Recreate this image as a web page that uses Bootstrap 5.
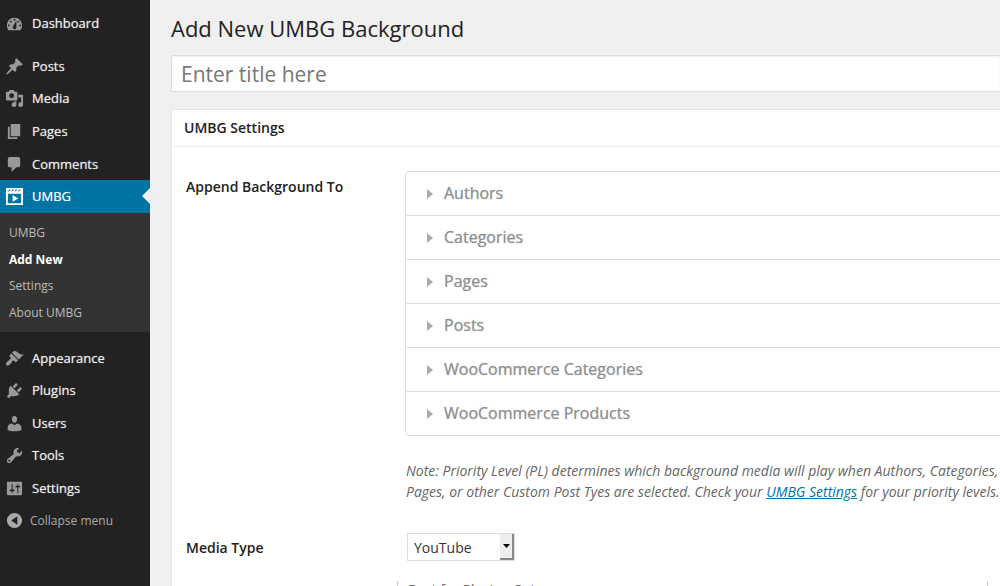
<!DOCTYPE html>
<html lang="en">
<head>
<meta charset="utf-8">
<meta name="viewport" content="width=device-width, initial-scale=1">
<title>Add New UMBG Background</title>
<link rel="stylesheet" href="https://cdn.jsdelivr.net/npm/bootstrap@5.3.0/dist/css/bootstrap.min.css">
<style>
body { font-family: "Open Sans", "Liberation Sans", sans-serif; font-size: 14px; line-height: 21px; background: #f0f0f0; color: #222; }
a { color: #0074a2; }
.admin-shell { height: 100vh; }
.side-menu { width: 150px; background: #222; padding-top: 7px; }
.menu-group { display: grid; grid-auto-rows: 1fr; margin-top: 10px; }
.menu-group.upper { height: 163px; }
.menu-group.lower { height: 195px; }
.side-menu .nav-link { color: #eee; padding: 0 0 0 5px; gap: 8px; font-size: 13px; text-shadow: 0 0 1px rgba(255,255,255,.6); }
.side-menu .nav-link.dash { height: 33px; }
.side-menu svg { width: 19px; height: 19px; fill: #999; flex: none; }
.side-menu .nav-link.current { position: relative; background: #0074a2; color: #fff; }
.side-menu .nav-link.current svg { fill: #fff; }
.nav-link.current::after { content: ""; position: absolute; right: 0; top: 8px; border: 8px solid transparent; border-right-color: #f0f0f0; border-left: 0; }
.sub-menu { display: grid; grid-auto-rows: 1fr; height: 119px; background: #333; padding: 6px 0; }
.side-menu .sub-menu .nav-link { padding-left: 9px; font-size: 12px; color: #bbb; text-shadow: none; }
.side-menu .sub-menu .nav-link.chosen { color: #fff; font-weight: 700; }
.collapse-btn { background: none; border: 0; color: #aaa; font-size: 12px; padding: 0 0 0 5px; gap: 6px; }
.side-menu .collapse-btn svg { fill: #aaa; }
.main-area { padding: 12px 0 0 21px; }
h1 { font-size: 22px; line-height: 32px; font-weight: 400; margin: 0 0 11px; }
.title-input { height: 37px; border: 1px solid #ddd; border-right: 0; border-radius: 0; padding: 0 9px; font-size: 21px; box-shadow: inset 0 1px 2px rgba(0,0,0,.07); }
.title-input::placeholder { color: #777; }
.settings-box { margin-top: 17px; background: #fff; border: 1px solid #e5e5e5; border-right: 0; }
.settings-box h2 { font-size: 14px; font-weight: 600; line-height: 36px; margin: 0; padding-left: 12px; border-bottom: 1px solid #eee; }
.field-row { padding-left: 14px; }
.field-row.media-row { padding-top: 31px; }
.field-name { width: 219px; flex: none; font-weight: 600; line-height: 32px; }
.media-row .field-name { line-height: 30px; }
.accordion-list { border: 1px solid #ddd; border-right: 0; border-radius: 5px 0 0 5px; }
.accordion-list button { display: flex; align-items: center; gap: 11px; width: 100%; height: 44px; padding: 0 0 0 21px; border: 0; border-bottom: 1px solid #ddd; background: none; color: #909090; font-size: 16px; text-shadow: 0 0 1px rgba(144,144,144,.7); }
.accordion-list button:last-child { border-bottom: 0; height: 43px; }
.accordion-list svg { width: 6px; height: 10px; fill: #aaa; }
.note { margin: 24px 0 0 1px; font-style: italic; color: #666; }
.media-field { padding-left: 2px; }
.media-select { appearance: none; width: 108px; height: 28px; border: 1px solid #ddd; border-radius: 0; padding: 0 6px; font-size: 14px; color: #333; background: #fff; }
.select-knob { position: absolute; right: 1px; top: 1px; bottom: 1px; width: 14px; background: #eee; border: solid #888; border-width: 0 2px 2px 0; pointer-events: none; }
.hint-box { border: solid #ccc; border-width: 0 1px; margin: 20px 12px 0 -10px; padding-left: 10px; height: 60px; color: #666; }
.hint-box legend { font-size: 14px; line-height: 18px; }
</style>
</head>
<body>
<div class="admin-shell d-flex overflow-hidden">
  <nav class="side-menu flex-shrink-0" aria-label="Main menu">
    <a class="nav-link d-flex align-items-center dash" href="#"><svg viewBox="0 0 20 20"><path fill-rule="evenodd" d="M3.760 17h12.480A7.956 7.956 0 0 0 18 12c0-4.420-3.580-8-8-8s-8 3.580-8 8c0 1.900.66 3.640 1.760 5zM10 5a1 1 0 1 1 0 2 1 1 0 0 1 0-2zM6 7a1 1 0 1 1 0 2 1 1 0 0 1 0-2zm8 0a1 1 0 1 1 0 2 1 1 0 0 1 0-2zM8.600 12.600 12 7v7a2 2 0 1 1-3.400-1.400zM4 11a1 1 0 1 1 0 2 1 1 0 0 1 0-2zm12 0a1 1 0 1 1 0 2 1 1 0 0 1 0-2z"/></svg>Dashboard</a>
    <div class="menu-group upper">
      <a class="nav-link d-flex align-items-center" href="#"><svg viewBox="0 0 20 20"><path d="M10.440 3.020l1.820-1.820 6.360 6.350-1.830 1.820c-1.050-.68-2.480-.57-3.410.36l-.75.75c-.92.93-1.040 2.350-.35 3.410l-1.830 1.820-2.410-2.410-2.800 2.790c-.42.42-3.380 2.710-3.800 2.290s1.860-3.390 2.280-3.810l2.790-2.790L4.100 9.360l1.830-1.820c1.050.69 2.480.57 3.400-.36l.75-.75c.93-.92 1.050-2.350.36-3.410z"/></svg>Posts</a>
      <a class="nav-link d-flex align-items-center" href="#"><svg viewBox="0 0 20 20"><path fill-rule="evenodd" d="M13 11V4c0-.55-.45-1-1-1h-1.670L9 1H5L3.670 3H2c-.55 0-1 .45-1 1v7c0 .55.45 1 1 1h10c.55 0 1-.45 1-1zM7 4.500a2.500 2.500 0 1 1 0 5 2.500 2.500 0 0 1 0-5zM14 6h5v10.500a2.500 2.500 0 1 1-2-2.450V9h-3zm-4 8.050V13h2v3.500a2.500 2.500 0 1 1-2-2.450z"/></svg>Media</a>
      <a class="nav-link d-flex align-items-center" href="#"><svg viewBox="0 0 20 20"><path d="M6 15V2h10v13H6zm-1 1h8v2H3V5h2v11z"/></svg>Pages</a>
      <a class="nav-link d-flex align-items-center" href="#"><svg viewBox="0 0 20 20"><path d="M5 2h9c1.100 0 2 .9 2 2v7c0 1.100-.9 2-2 2h-2l-5 5v-5H5c-1.100 0-2-.9-2-2V4c0-1.100.9-2 2-2z"/></svg>Comments</a>
      <a class="nav-link d-flex align-items-center current" href="#"><svg viewBox="0 0 20 20"><path fill-rule="evenodd" d="M1 1h18v18H1zM3 7v10h14V7zM3 4.500h1.500L6 2.500H4.500zm3.500 0H8l1.500-2H8zm3.500 0h1.500l1.500-2h-1.500zm3.500 0H15l1.500-2H15zM8 8.500l6 3.500-6 3.500z"/></svg>UMBG</a>
    </div>
    <div class="sub-menu">
      <a class="nav-link d-flex align-items-center" href="#">UMBG</a>
      <a class="nav-link d-flex align-items-center chosen" href="#">Add New</a>
      <a class="nav-link d-flex align-items-center" href="#">Settings</a>
      <a class="nav-link d-flex align-items-center" href="#">About UMBG</a>
    </div>
    <div class="menu-group lower">
      <a class="nav-link d-flex align-items-center" href="#"><svg viewBox="0 0 20 20"><path d="M14.480 11.060L7.410 3.990l1.500-1.500c.5-.56 2.300-.47 3.510.32 1.210.8 1.430 1.280 2.910 2.100 1.180.64 2.450 1.260 4.450.85zm-.71.71L6.700 4.700 4.930 6.470c-.39.39-.39 1.020 0 1.410l1.060 1.060c.39.39.39 1.030 0 1.420-.6.6-1.430 1.110-2.210 1.690-.35.26-.7.53-1.010.84C1.430 14.230.4 16.080 1.400 17.070c.99 1 2.840-.03 4.180-1.360.31-.31.58-.66.85-1.020.57-.78 1.080-1.610 1.690-2.210.39-.39 1.020-.39 1.410 0l1.060 1.060c.39.39 1.020.39 1.410 0z"/></svg>Appearance</a>
      <a class="nav-link d-flex align-items-center" href="#"><svg viewBox="0 0 20 20"><path d="M13.110 4.360L9.870 7.600 8 5.730l3.240-3.240c.35-.34 1.050-.2 1.560.32.52.51.66 1.210.31 1.550zm-8 1.770l.91-1.120 9.010 9.010-1.190.84c-.71.71-2.630 1.160-3.820 1.160H6.140L4.900 17.260c-.59.59-1.540.59-2.120 0-.59-.58-.59-1.530 0-2.120l1.240-1.240v-3.880c0-1.130.4-3.190 1.090-3.890zm7.260 3.970l3.240-3.240c.34-.35 1.040-.21 1.550.31.52.51.66 1.210.31 1.550l-3.240 3.250z"/></svg>Plugins</a>
      <a class="nav-link d-flex align-items-center" href="#"><svg viewBox="0 0 20 20"><path d="M10 9.250c-2.270 0-2.730-3.440-2.730-3.440C7 4.020 7.820 2 9.970 2c2.160 0 2.980 2.020 2.710 3.810 0 0-.41 3.440-2.680 3.440zm0 2.570L12.720 10c2.390 0 4.520 2.330 4.520 4.530v2.490s-3.650 1.130-7.240 1.130c-3.650 0-7.240-1.130-7.240-1.130v-2.490c0-2.250 1.940-4.480 4.470-4.480z"/></svg>Users</a>
      <a class="nav-link d-flex align-items-center" href="#"><svg viewBox="0 0 20 20"><path fill-rule="evenodd" d="M16.680 9.770c-1.340 1.340-3.300 1.670-4.950.99l-5.410 6.520c-.99.99-2.590.99-3.580 0s-.99-2.590 0-3.570l6.520-5.420c-.68-1.650-.35-3.610.99-4.950 1.280-1.280 3.120-1.620 4.720-1.060l-2.890 2.890 2.820 2.820 2.860-2.870c.53 1.580.18 3.390-1.080 4.650zM3.810 16.210c.4.39 1.040.39 1.430 0 .4-.4.4-1.040 0-1.430-.39-.4-1.030-.4-1.430 0-.39.39-.39 1.030 0 1.430z"/></svg>Tools</a>
      <a class="nav-link d-flex align-items-center" href="#"><svg viewBox="0 0 20 20"><path fill-rule="evenodd" d="M18 16V4c0-.55-.45-1-1-1H3c-.55 0-1 .45-1 1v12c0 .55.45 1 1 1h14c.55 0 1-.45 1-1zM8 11h1c.55 0 1 .45 1 1s-.45 1-1 1H8v1.500c0 .28-.22.5-.5.5s-.5-.22-.5-.5V13H6c-.55 0-1-.45-1-1s.45-1 1-1h1V5.500c0-.28.22-.5.5-.5s.5.22.5.5V11zm5-2h-1c-.55 0-1-.45-1-1s.45-1 1-1h1V5.500c0-.28.22-.5.5-.5s.5.22.5.5V7h1c.55 0 1 .45 1 1s-.45 1-1 1h-1v5.500c0 .28-.22.5-.5.5s-.5-.22-.5-.5V9z"/></svg>Settings</a>
      <button type="button" class="collapse-btn d-flex align-items-center"><svg viewBox="0 0 20 20"><path fill-rule="evenodd" d="M10 2a8 8 0 1 1 0 16 8 8 0 0 1 0-16zM13 5.500 6.500 10l6.500 4.500z"/></svg>Collapse menu</button>
    </div>
  </nav>
  <main class="main-area flex-grow-1">
    <h1>Add New UMBG Background</h1>
    <input class="title-input form-control" type="text" placeholder="Enter title here" aria-label="Title">
    <section class="settings-box">
      <h2>UMBG Settings</h2>
      <div class="field-row d-flex pt-4">
        <div class="field-name">Append Background To</div>
        <div class="flex-grow-1">
          <div class="accordion-list">
            <button type="button"><svg viewBox="0 0 6 10"><path d="M0 0l6 5-6 5z"/></svg>Authors</button>
            <button type="button"><svg viewBox="0 0 6 10"><path d="M0 0l6 5-6 5z"/></svg>Categories</button>
            <button type="button"><svg viewBox="0 0 6 10"><path d="M0 0l6 5-6 5z"/></svg>Pages</button>
            <button type="button"><svg viewBox="0 0 6 10"><path d="M0 0l6 5-6 5z"/></svg>Posts</button>
            <button type="button"><svg viewBox="0 0 6 10"><path d="M0 0l6 5-6 5z"/></svg>WooCommerce Categories</button>
            <button type="button"><svg viewBox="0 0 6 10"><path d="M0 0l6 5-6 5z"/></svg>WooCommerce Products</button>
          </div>
          <p class="note">Note: Priority Level (PL) determines which background media will play when Authors, Categories, Pages, or other Custom Post Tyes are selected. Check your <a href="#">UMBG Settings</a> for your priority levels.</p>
        </div>
      </div>
      <div class="field-row media-row d-flex">
        <label class="field-name" for="media-type">Media Type</label>
        <div class="media-field flex-grow-1">
          <div class="position-relative d-inline-block">
            <select class="media-select d-block" id="media-type"><option>YouTube</option><option>Vimeo</option></select>
            <span class="select-knob d-flex align-items-center justify-content-center"><svg width="7" height="4" viewBox="0 0 7 4"><path d="M0 0h7L3.500 4z"/></svg></span>
          </div>
          <fieldset class="hint-box"><legend class="m-0 p-0">Best for Playing Cuts</legend></fieldset>
        </div>
      </div>
    </section>
  </main>
</div>
<script src="https://cdn.jsdelivr.net/npm/bootstrap@5.3.0/dist/js/bootstrap.bundle.min.js"></script>
</body>
</html>
